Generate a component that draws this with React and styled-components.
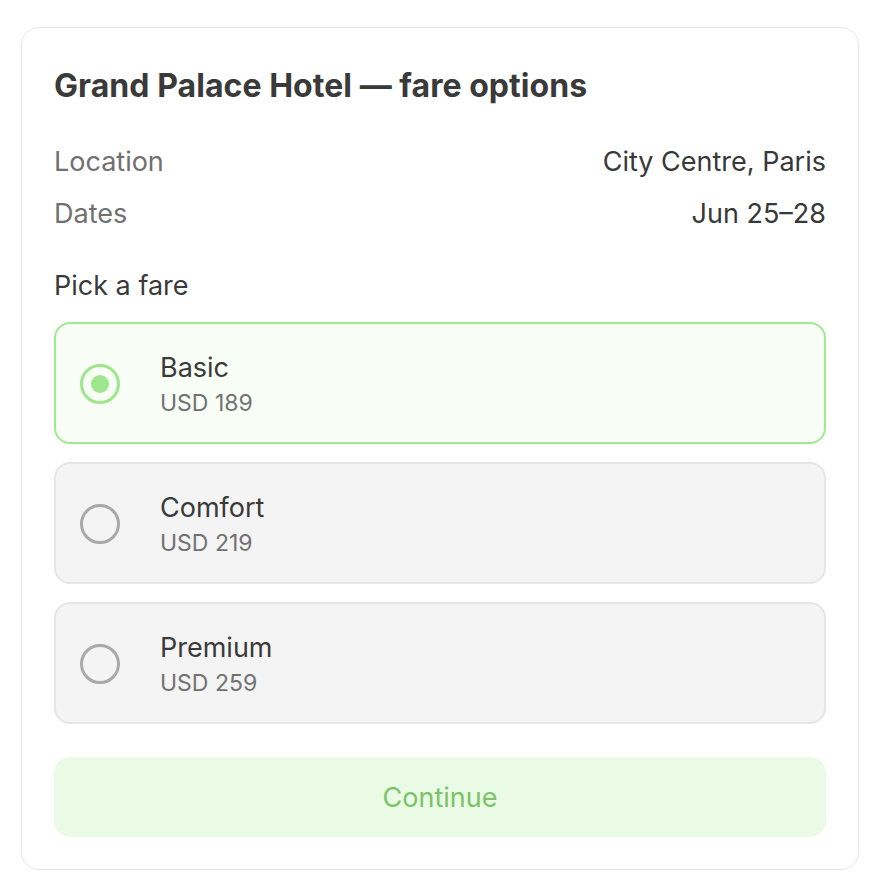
import React, { useState } from 'react'
import styled, { createGlobalStyle } from 'styled-components'

const Global = createGlobalStyle`
  body {
    margin: 0;
    background: #fff;
    font-family: Inter, "Noto Sans", sans-serif;
  }
`

const Page = styled.div`
  padding: 27px 21px;
`

const Card = styled.div`
  width: 838px;
  box-sizing: border-box;
  border: 1.5px solid #e6e6e6;
  border-radius: 18px;
  padding: 32px;
  background: #fff;
`

const Title = styled.h1`
  margin: 0 0 24px;
  font-size: 32px;
  line-height: 52px;
  font-weight: 700;
  color: #3a3a3a;
  letter-spacing: 0.05px;
`

const InfoRow = styled.div`
  display: flex;
  justify-content: space-between;
  font-size: 27px;
  line-height: 52px;
`

const Label = styled.span`
  color: #707070;
`

const Value = styled.span`
  color: #383838;
`

const Section = styled.div`
  margin: 28px 0 18px;
  font-size: 27px;
  line-height: 36px;
  color: #3a3a3a;
`

const Options = styled.div`
  display: flex;
  flex-direction: column;
  gap: 18px;
`

const Option = styled.div`
  display: flex;
  align-items: center;
  height: 122px;
  box-sizing: border-box;
  padding-left: 24px;
  border-radius: 16px;
  border: 2px solid ${p => (p.$active ? '#a2e88f' : '#e6e6e6')};
  background: ${p => (p.$active ? '#f8fdf6' : '#f4f4f4')};
  cursor: pointer;
`

const Radio = styled.span`
  width: 40px;
  height: 40px;
  margin-top: 2px;
  box-sizing: border-box;
  border-radius: 50%;
  border: 3.5px solid ${p => (p.$active ? '#9ee68b' : '#a9a9a9')};
  display: flex;
  align-items: center;
  justify-content: center;
  flex-shrink: 0;
  &::after {
    content: '';
    display: ${p => (p.$active ? 'block' : 'none')};
    width: 18px;
    height: 18px;
    border-radius: 50%;
    background: #9ee68b;
  }
`

const OptionText = styled.div`
  margin: 4px 0 0 40px;
  display: flex;
  flex-direction: column;
`

const OptionName = styled.span`
  font-size: 27px;
  line-height: 36px;
  color: #3a3a3a;
`

const OptionPrice = styled.span`
  font-size: 23px;
  line-height: 34px;
  color: #727272;
`

const Button = styled.button`
  margin-top: 33px;
  width: 100%;
  height: 80px;
  border: none;
  border-radius: 16px;
  background: #e9fbe4;
  color: #7bc268;
  font-family: inherit;
  font-size: 27px;
  cursor: pointer;
`

const fares = [
  { name: 'Basic', price: 'USD 189' },
  { name: 'Comfort', price: 'USD 219' },
  { name: 'Premium', price: 'USD 259' },
]

export default function App() {
  const [picked, setPicked] = useState(0)
  return (
    <Page>
      <Global />
      <Card>
        <Title>Grand Palace Hotel — fare options</Title>
        <InfoRow>
          <Label>Location</Label>
          <Value>City Centre, Paris</Value>
        </InfoRow>
        <InfoRow>
          <Label>Dates</Label>
          <Value>Jun 25–28</Value>
        </InfoRow>
        <Section>Pick a fare</Section>
        <Options>
          {fares.map((f, i) => (
            <Option key={f.name} $active={picked === i} onClick={() => setPicked(i)}>
              <Radio $active={picked === i} />
              <OptionText>
                <OptionName>{f.name}</OptionName>
                <OptionPrice>{f.price}</OptionPrice>
              </OptionText>
            </Option>
          ))}
        </Options>
        <Button>Continue</Button>
      </Card>
    </Page>
  )
}
